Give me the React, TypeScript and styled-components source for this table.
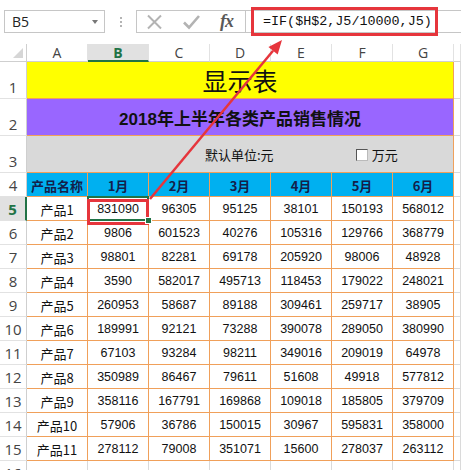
import React from 'react';
import styled, { createGlobalStyle, css } from 'styled-components';

const ORANGE = '#f0a05a';
const GRID = '#dadada';
const HEAD_LINE = '#cfcfcf';
const GREEN = '#217346';
const RED = '#e6353c';

const GlobalStyle = createGlobalStyle`
  html, body { margin: 0; padding: 0; background: #fff; }
  body { font-family: "Liberation Sans", "Noto Sans CJK SC", sans-serif; }
`;

const Page = styled.div`
  position: relative;
  width: 461px;
  height: 470px;
  overflow: hidden;
  background: #fff;
`;

const Toolbar = styled.div`
  display: flex;
  align-items: flex-start;
  height: 44px;
  padding-top: 10px;
  box-sizing: border-box;
`;

const NameBox = styled.div`
  margin-left: 4px;
  width: 101px;
  height: 23px;
  box-sizing: border-box;
  border: 1px solid #c6c6c6;
  display: flex;
  align-items: center;
  justify-content: space-between;
  padding: 0 6px 0 7px;
  font-family: "Open Sans", "Liberation Sans", sans-serif;
  font-size: 14px;
  color: #222;
`;

const DropArrow = styled.span`
  width: 0;
  height: 0;
  border-left: 3.5px solid transparent;
  border-right: 3.5px solid transparent;
  border-top: 4px solid #777;
`;

const Grip = styled.div`
  width: 31px;
  height: 23px;
  display: flex;
  flex-direction: column;
  align-items: center;
  justify-content: center;
  gap: 2px;
`;

const GripDot = styled.span`
  width: 2px;
  height: 2px;
  background: #b4b4b4;
`;

const FormulaBar = styled.div`
  flex: 1;
  height: 23px;
  box-sizing: border-box;
  border: 1px solid #c6c6c6;
  border-right: none;
  display: flex;
  align-items: stretch;
`;

const IconGroup = styled.div`
  width: 108px;
  display: flex;
  align-items: center;
  padding-left: 8px;
  box-sizing: border-box;
  gap: 0;
`;

const IconSlot = styled.span<{ $w: number }>`
  width: ${p => p.$w}px;
  display: flex;
  align-items: center;
  justify-content: flex-start;
`;

const Fx = styled.span`
  font-family: "Liberation Serif", serif;
  font-style: italic;
  font-weight: bold;
  font-size: 18px;
  color: #595959;
  letter-spacing: -1px;
`;

const FormulaInput = styled.div`
  flex: 1;
  border-left: 1px solid #c6c6c6;
  padding-left: 17px;
  display: flex;
  align-items: center;
  font-family: "Liberation Mono", monospace;
  font-size: 13.4px;
  color: #111;
  white-space: nowrap;
`;

const Sheet = styled.div`
  display: grid;
  grid-template-columns: 27px repeat(7, 61px) 1fr;
  grid-template-rows: 18px 37px 37px 37px repeat(13, 24px);
`;

const Corner = styled.div`
  box-sizing: border-box;
  border-right: 1px solid ${HEAD_LINE};
  border-bottom: 1px solid ${HEAD_LINE};
  display: flex;
  align-items: flex-end;
  justify-content: flex-end;
  padding: 0 3px 3px 0;
`;

const CornerMark = styled.span`
  width: 0;
  height: 0;
  border-left: 10px solid transparent;
  border-bottom: 10px solid #d6d6d6;
`;

const ColHead = styled.div<{ $active?: boolean }>`
  box-sizing: border-box;
  border-right: 1px solid #e2e2e2;
  border-bottom: 1px solid ${HEAD_LINE};
  display: flex;
  align-items: center;
  justify-content: center;
  font-family: "Open Sans", "Liberation Sans", sans-serif;
  font-size: 14px;
  color: #444;
  ${p => p.$active && css`
    background: #e1e1e1;
    color: ${GREEN};
    font-weight: bold;
    border-bottom: 2px solid ${GREEN};
    padding-top: 1px;
  `}
`;

const RowHead = styled.div<{ $active?: boolean }>`
  box-sizing: border-box;
  border-right: 1px solid ${HEAD_LINE};
  border-bottom: 1px solid #e2e2e2;
  display: flex;
  align-items: flex-end;
  justify-content: center;
  padding-bottom: 1px;
  font-family: "Open Sans", "Liberation Sans", sans-serif;
  font-size: 15px;
  line-height: 20px;
  color: #444;
  ${p => p.$active && css`
    background: #e1e1e1;
    color: ${GREEN};
    font-weight: bold;
    border-right: 2px solid ${GREEN};
  `}
`;

const Banner = styled.div<{ $bg: string; $size: number; $bold?: boolean }>`
  grid-column: 2 / 9;
  box-sizing: border-box;
  background: ${p => p.$bg};
  border-right: 1px solid ${ORANGE};
  border-bottom: 1px solid ${ORANGE};
  display: flex;
  align-items: center;
  justify-content: center;
  font-family: "Liberation Sans", "Noto Sans CJK SC", sans-serif;
  font-size: ${p => p.$size}px;
  font-weight: ${p => (p.$bold ? 'bold' : 'normal')};
  color: #111;
`;

const UnitRow = styled.div`
  grid-column: 2 / 9;
  box-sizing: border-box;
  background: #d9d9d9;
  border-right: 1px solid ${ORANGE};
  border-bottom: 1px solid ${ORANGE};
  display: flex;
  align-items: center;
  padding: 1px 0 0 178px;
  font-family: "Noto Sans CJK SC", sans-serif;
  font-size: 13px;
  color: #111;
`;

const CheckLabel = styled.label`
  margin-left: 82px;
  display: flex;
  align-items: center;
  gap: 4px;
`;

const CheckBox = styled.span`
  width: 12px;
  height: 12px;
  box-sizing: border-box;
  background: #fff;
  border-top: 1px solid #555;
  border-left: 1px solid #555;
  border-right: 1px solid #bbb;
  border-bottom: 1px solid #bbb;
`;

const Cell = styled.div<{ $head?: boolean; $name?: boolean; $selected?: boolean }>`
  position: relative;
  box-sizing: border-box;
  border-right: 1px solid ${ORANGE};
  border-bottom: 1px solid ${ORANGE};
  display: flex;
  align-items: flex-end;
  justify-content: center;
  padding-bottom: 2px;
  font-family: "Liberation Sans", "Noto Sans CJK SC", sans-serif;
  font-size: ${p => (p.$name ? 13 : 12.5)}px;
  line-height: 17px;
  color: #111;
  white-space: nowrap;
  ${p => p.$name && css`
    font-family: "Noto Sans CJK SC", sans-serif;
  `}
  ${p => p.$head && css`
    background: #00b0f0;
    font-family: "Noto Sans CJK SC", sans-serif;
    font-weight: bold;
    font-size: 13px;
    color: #13204a;
  `}
  ${p => p.$selected && css`
    &::after {
      content: '';
      position: absolute;
      inset: -1px -1px -1px -1px;
      border: 2px solid ${GREEN};
    }
    &::before {
      content: '';
      position: absolute;
      right: -4px;
      bottom: -4px;
      width: 5px;
      height: 5px;
      background: ${GREEN};
      border: 1px solid #fff;
      z-index: 1;
    }
  `}
`;

const Blank = styled.div`
  box-sizing: border-box;
  border-right: 1px solid ${GRID};
  border-bottom: 1px solid ${GRID};
`;

const Overlay = styled.svg`
  position: absolute;
  left: 0;
  top: 0;
  pointer-events: none;
`;

const columns = ['A', 'B', 'C', 'D', 'E', 'F', 'G'];
const months = ['1月', '2月', '3月', '4月', '5月', '6月'];

const data: [string, number[]][] = [
  ['产品1', [831090, 96305, 95125, 38101, 150193, 568012]],
  ['产品2', [9806, 601523, 40276, 105316, 129766, 368779]],
  ['产品3', [98801, 82281, 69178, 205920, 98006, 48928]],
  ['产品4', [3590, 582017, 495713, 118453, 179022, 248021]],
  ['产品5', [260953, 58687, 89188, 309461, 259717, 38905]],
  ['产品6', [189991, 92121, 73288, 390078, 289050, 380990]],
  ['产品7', [67103, 93284, 98211, 349016, 209019, 64978]],
  ['产品8', [350989, 86467, 79611, 51608, 49918, 577812]],
  ['产品9', [358116, 167791, 169868, 109018, 185805, 379709]],
  ['产品10', [57906, 36786, 150015, 30967, 595831, 358000]],
  ['产品11', [278112, 79008, 351071, 15600, 278037, 263112]],
];

const CancelIcon = () => (
  <svg width="20" height="16" viewBox="0 0 20 16">
    <path d="M3 1.5 L16 14.5 M16 1.5 L3 14.5" stroke="#b3b3b3" strokeWidth="2" fill="none" />
  </svg>
);

const EnterIcon = () => (
  <svg width="20" height="16" viewBox="0 0 20 16">
    <path d="M2 8.5 L7 13.5 L17 2" stroke="#b3b3b3" strokeWidth="2.6" fill="none" />
  </svg>
);

export default function App() {
  // arrow geometry
  const tip = { x: 282, y: 40 };
  const start = { x: 150, y: 199 };
  const dx = tip.x - start.x;
  const dy = tip.y - start.y;
  const len = Math.hypot(dx, dy);
  const ux = dx / len;
  const uy = dy / len;
  const head = 14;
  const half = 6;
  const bx = tip.x - ux * head;
  const by = tip.y - uy * head;
  const nx = -uy;
  const ny = ux;
  const headPts = `${tip.x},${tip.y} ${bx + nx * half},${by + ny * half} ${bx - nx * half},${by - ny * half}`;

  return (
    <>
      <GlobalStyle />
      <Page>
        <Toolbar>
          <NameBox>
            <span>B5</span>
            <DropArrow />
          </NameBox>
          <Grip>
            <GripDot />
            <GripDot />
            <GripDot />
          </Grip>
          <FormulaBar>
            <IconGroup>
              <IconSlot $w={37}><CancelIcon /></IconSlot>
              <IconSlot $w={38}><EnterIcon /></IconSlot>
              <IconSlot $w={24}><Fx>fx</Fx></IconSlot>
            </IconGroup>
            <FormulaInput>=IF($H$2,J5/10000,J5)</FormulaInput>
          </FormulaBar>
        </Toolbar>

        <Sheet>
          <Corner><CornerMark /></Corner>
          {columns.map(c => (
            <ColHead key={c} $active={c === 'B'}>{c}</ColHead>
          ))}
          <ColHead />

          <RowHead>1</RowHead>
          <Banner $bg="#ffff00" $size={25}>
            <span style={{ fontFamily: '"Noto Sans CJK SC", sans-serif' }}>显示表</span>
          </Banner>
          <Blank />

          <RowHead>2</RowHead>
          <Banner $bg="#9966ff" $size={17} $bold>
            <span>2018<span style={{ fontFamily: '"Noto Sans CJK SC", sans-serif' }}>年上半年各类产品销售情况</span></span>
          </Banner>
          <Blank />

          <RowHead>3</RowHead>
          <UnitRow>
            <span>默认单位:元</span>
            <CheckLabel>
              <CheckBox />
              <span>万元</span>
            </CheckLabel>
          </UnitRow>
          <Blank />

          <RowHead>4</RowHead>
          <Cell $head>产品名称</Cell>
          {months.map(m => (
            <Cell key={m} $head>{m}</Cell>
          ))}
          <Blank />

          {data.map(([name, vals], i) => (
            <React.Fragment key={name}>
              <RowHead $active={i === 0}>{i + 5}</RowHead>
              <Cell $name>{name}</Cell>
              {vals.map((v, j) => (
                <Cell key={j} $selected={i === 0 && j === 0}>{v}</Cell>
              ))}
              <Blank />
            </React.Fragment>
          ))}

          <RowHead>16</RowHead>
          {columns.map(c => <Blank key={c} />)}
          <Blank />
        </Sheet>

        <Overlay width="461" height="470" viewBox="0 0 461 470">
          <rect x="252.5" y="8.5" width="184" height="26" fill="none" stroke={RED} strokeWidth="3" />
          <rect x="88.5" y="200.5" width="59" height="23" fill="none" stroke={RED} strokeWidth="3" />
          <line x1={start.x} y1={start.y} x2={bx} y2={by} stroke={RED} strokeWidth="2.5" />
          <polygon points={headPts} fill={RED} />
        </Overlay>
      </Page>
    </>
  );
}
